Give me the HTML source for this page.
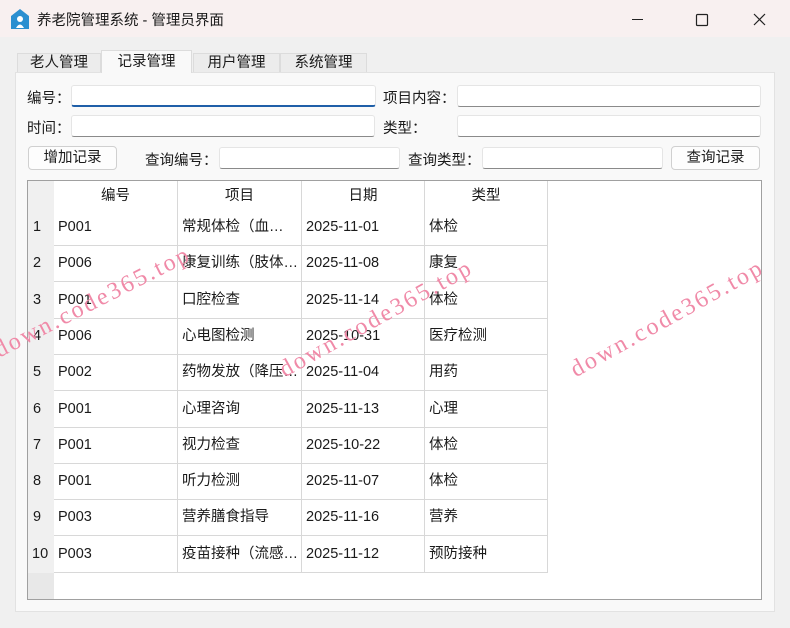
<!DOCTYPE html>
<html><head><meta charset="utf-8"><style>
*{box-sizing:border-box;margin:0;padding:0}
body{width:790px;height:628px;background:#f0f0f0;font-family:"Liberation Sans","Noto Sans CJK SC",sans-serif;font-size:14.5px;color:#1a1a1a;position:relative;overflow:hidden}
.a{position:absolute}
.title{left:0;top:0;width:790px;height:37px;background:#f8f0f0}
.tab{position:absolute;top:53px;height:20px;border:1px solid #dcdcdc;border-bottom:none;background:#ececec;text-align:center;line-height:18px;font-size:14.5px}
.tab.sel{top:50px;height:23px;background:#f9f9f9;line-height:22px}
.panel{left:15px;top:72px;width:760px;height:540px;background:#f9f9f9;border:1px solid #e2e2e2}
.inp{position:absolute;height:22px;background:#fff;border:1px solid #e5e5e5;border-bottom:1px solid #8a8a8a;border-radius:3px}
.lbl{position:absolute}
.btn{position:absolute;height:24px;background:#fdfdfd;border:1px solid #d0d0d0;border-radius:4px;text-align:center;line-height:22px}
.tbl{left:27px;top:180px;width:735px;height:420px;background:#fff;border:1px solid #a0a0a0}
.cell{position:absolute;height:37px;border-right:1px solid #d8d8d8;border-bottom:1px solid #d8d8d8;line-height:37px;padding-left:4px;white-space:nowrap}
.wm{position:absolute;color:#f08aa8;font-family:"Liberation Serif",serif;font-size:24px;letter-spacing:2.5px;transform-origin:0 0;white-space:nowrap}
</style></head><body>
<div class="a title"></div>
<svg class="a" style="left:10px;top:8px" width="20" height="22" viewBox="0 0 20 22"><path d="M10 1 L19 8 V21 H1 V8 Z" fill="#2b8fd0"/><circle cx="10" cy="11" r="3" fill="#fff"/><path d="M6 20 Q10 13 14 20 Z" fill="#fff"/></svg>
<div class="a" style="left:37px;top:9px">养老院管理系统 - 管理员界面</div>
<svg class="a" style="left:632px;top:12px" width="140" height="16"><line x1="0" y1="7.5" x2="11" y2="7.5" stroke="#222" stroke-width="1"/><rect x="64.5" y="2.5" width="11" height="11" fill="none" stroke="#222" stroke-width="1.2" rx="1"/><path d="M122 2 L133 13 M133 2 L122 13" stroke="#222" stroke-width="1.2"/></svg>
<div class="tab" style="left:17px;width:84px">老人管理</div>
<div class="tab" style="left:193px;width:87px">用户管理</div>
<div class="tab" style="left:280px;width:87px">系统管理</div>
<div class="a panel"></div>
<div class="tab sel" style="left:101px;width:91px">记录管理</div>
<div class="lbl" style="left:27px;top:87px">编号：</div>
<div class="inp" style="left:71px;top:85px;width:305px;border-bottom:2px solid #1f5fa8"></div>
<div class="lbl" style="left:383px;top:87px">项目内容：</div>
<div class="inp" style="left:457px;top:85px;width:304px"></div>
<div class="lbl" style="left:27px;top:117px">时间：</div>
<div class="inp" style="left:71px;top:115px;width:304px"></div>
<div class="lbl" style="left:383px;top:117px">类型：</div>
<div class="inp" style="left:457px;top:115px;width:304px"></div>
<div class="btn" style="left:28px;top:146px;width:89px">增加记录</div>
<div class="lbl" style="left:145px;top:149px">查询编号：</div>
<div class="inp" style="left:219px;top:147px;width:181px"></div>
<div class="lbl" style="left:408px;top:149px">查询类型：</div>
<div class="inp" style="left:482px;top:147px;width:181px"></div>
<div class="btn" style="left:671px;top:146px;width:89px">查询记录</div>
<div class="a tbl">
<div class="a" style="left:0;top:0;width:26px;height:418px;background:#f0f0f0"></div>
<div class="a" style="left:0;top:392px;width:26px;height:26px;background:#e8e8e8"></div>
<div class="a" style="left:26px;top:0;width:124px;height:29px;text-align:center;line-height:30px;border-right:1px solid #d8d8d8">编号</div>
<div class="a" style="left:150px;top:0;width:124px;height:29px;text-align:center;line-height:30px;border-right:1px solid #d8d8d8">项目</div>
<div class="a" style="left:274px;top:0;width:123px;height:29px;text-align:center;line-height:30px;border-right:1px solid #d8d8d8">日期</div>
<div class="a" style="left:397px;top:0;width:123px;height:29px;text-align:center;line-height:30px;border-right:1px solid #d8d8d8">类型</div>
</div>
<div class="a" style="left:28px;top:209px;width:520px">
<div class="cell" style="top:0;left:0;width:27px;border:none;padding-left:5px">1</div><div class="cell" style="top:0;left:26px;width:124px">P001</div><div class="cell" style="top:0;left:150px;width:124px">常规体检（血…</div><div class="cell" style="top:0;left:274px;width:123px">2025-11-01</div><div class="cell" style="top:0;left:397px;width:123px">体检</div>
<div class="cell" style="top:36.3px;left:0;width:27px;border:none;padding-left:5px">2</div><div class="cell" style="top:36.3px;left:26px;width:124px">P006</div><div class="cell" style="top:36.3px;left:150px;width:124px">康复训练（肢体…</div><div class="cell" style="top:36.3px;left:274px;width:123px">2025-11-08</div><div class="cell" style="top:36.3px;left:397px;width:123px">康复</div>
<div class="cell" style="top:72.6px;left:0;width:27px;border:none;padding-left:5px">3</div><div class="cell" style="top:72.6px;left:26px;width:124px">P001</div><div class="cell" style="top:72.6px;left:150px;width:124px">口腔检查</div><div class="cell" style="top:72.6px;left:274px;width:123px">2025-11-14</div><div class="cell" style="top:72.6px;left:397px;width:123px">体检</div>
<div class="cell" style="top:108.9px;left:0;width:27px;border:none;padding-left:5px">4</div><div class="cell" style="top:108.9px;left:26px;width:124px">P006</div><div class="cell" style="top:108.9px;left:150px;width:124px">心电图检测</div><div class="cell" style="top:108.9px;left:274px;width:123px">2025-10-31</div><div class="cell" style="top:108.9px;left:397px;width:123px">医疗检测</div>
<div class="cell" style="top:145.2px;left:0;width:27px;border:none;padding-left:5px">5</div><div class="cell" style="top:145.2px;left:26px;width:124px">P002</div><div class="cell" style="top:145.2px;left:150px;width:124px">药物发放（降压…</div><div class="cell" style="top:145.2px;left:274px;width:123px">2025-11-04</div><div class="cell" style="top:145.2px;left:397px;width:123px">用药</div>
<div class="cell" style="top:181.5px;left:0;width:27px;border:none;padding-left:5px">6</div><div class="cell" style="top:181.5px;left:26px;width:124px">P001</div><div class="cell" style="top:181.5px;left:150px;width:124px">心理咨询</div><div class="cell" style="top:181.5px;left:274px;width:123px">2025-11-13</div><div class="cell" style="top:181.5px;left:397px;width:123px">心理</div>
<div class="cell" style="top:217.8px;left:0;width:27px;border:none;padding-left:5px">7</div><div class="cell" style="top:217.8px;left:26px;width:124px">P001</div><div class="cell" style="top:217.8px;left:150px;width:124px">视力检查</div><div class="cell" style="top:217.8px;left:274px;width:123px">2025-10-22</div><div class="cell" style="top:217.8px;left:397px;width:123px">体检</div>
<div class="cell" style="top:254.1px;left:0;width:27px;border:none;padding-left:5px">8</div><div class="cell" style="top:254.1px;left:26px;width:124px">P001</div><div class="cell" style="top:254.1px;left:150px;width:124px">听力检测</div><div class="cell" style="top:254.1px;left:274px;width:123px">2025-11-07</div><div class="cell" style="top:254.1px;left:397px;width:123px">体检</div>
<div class="cell" style="top:290.4px;left:0;width:27px;border:none;padding-left:5px">9</div><div class="cell" style="top:290.4px;left:26px;width:124px">P003</div><div class="cell" style="top:290.4px;left:150px;width:124px">营养膳食指导</div><div class="cell" style="top:290.4px;left:274px;width:123px">2025-11-16</div><div class="cell" style="top:290.4px;left:397px;width:123px">营养</div>
<div class="cell" style="top:326.7px;left:0;width:27px;border:none;padding-left:4px">10</div><div class="cell" style="top:326.7px;left:26px;width:124px">P003</div><div class="cell" style="top:326.7px;left:150px;width:124px">疫苗接种（流感…</div><div class="cell" style="top:326.7px;left:274px;width:123px">2025-11-12</div><div class="cell" style="top:326.7px;left:397px;width:123px">预防接种</div>
</div>
<div class="wm" style="left:-10px;top:340px;transform:rotate(-27deg)">down.code365.top</div>
<div class="wm" style="left:275px;top:360px;transform:rotate(-29deg)">down.code365.top</div>
<div class="wm" style="left:566px;top:360px;transform:rotate(-29deg)">down.code365.top</div>
</body></html>
